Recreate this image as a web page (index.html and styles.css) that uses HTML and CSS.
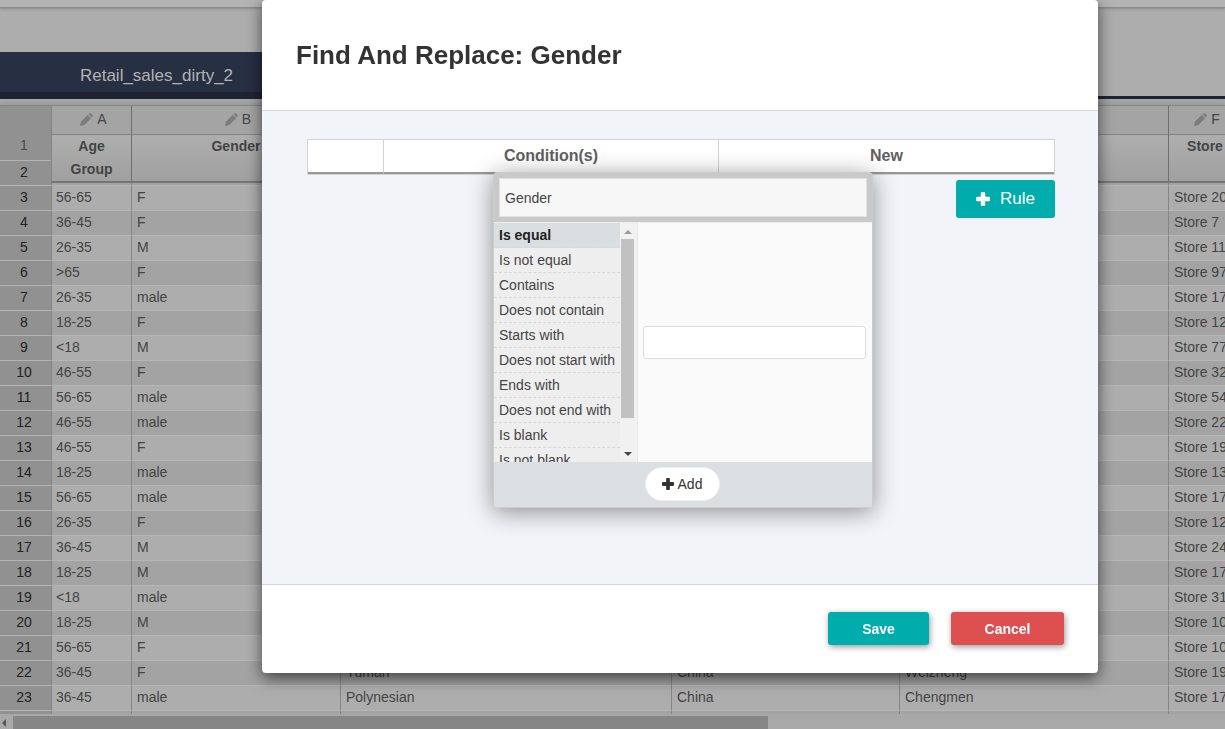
FILE: index.html
```
<!DOCTYPE html>
<html lang="en">
<head>
<meta charset="utf-8">
<title>Find And Replace</title>
<link rel="stylesheet" href="styles.css">
</head>
<body>
<svg class="defs" aria-hidden="true">
  <symbol id="pencil" viewBox="0 0 14 14"><path d="M8.400 2 12 5.600 4.600 13 .9 13.900Q0 14 .1 13.100L1 9.400ZM9.200 1.200 10 .5Q11 -.4 12 .5L13.500 2Q14.400 3 13.500 4L12.800 4.800Z"/></symbol>
  <symbol id="plus" viewBox="0 0 14 14"><path d="M5.700 0h2.600q.9 0 .9.900V4.800h3.900q.9 0 .9.900v2.600q0 .9-.9.900H9.200v3.900q0 .9-.9.900H5.700q-.9 0-.9-.9V9.200H.9Q0 9.200 0 8.300V5.700Q0 4.800.9 4.800H4.800V.9Q4.800 0 5.700 0Z"/></symbol>
</svg>
<main class="workspace">
  <div class="topbar"></div>
  <nav class="tabs"><a class="tab" href="#">Retail_sales_dirty_2</a></nav>
  <div class="sheet">
    <div class="row-numbers" id="numbers"></div>
    <table class="grid">
      <colgroup><col class="c-a"><col class="c-b"><col class="c-c"><col class="c-d"><col class="c-e"><col class="c-f"></colgroup>
      <thead>
        <tr class="letters" id="letters"></tr>
        <tr class="names"><th>Age<br>Group</th><th>Gender</th><th></th><th></th><th></th><th>Store</th></tr>
        <tr class="spacer"><td></td><td></td><td></td><td></td><td></td><td></td></tr>
      </thead>
      <tbody id="rows"></tbody>
    </table>
  </div>
  <div class="hscroll">
    <svg class="arrow-left" viewBox="0 0 4 8"><path d="M4 0v8L0 4z"/></svg>
    <div class="hthumb"></div>
  </div>
</main>
<div class="overlay">
  <section class="modal" role="dialog" aria-labelledby="title">
    <header class="modal-head"><h1 id="title">Find And Replace: Gender</h1></header>
    <div class="modal-body">
      <table class="rules"><thead><tr><th class="rule-index"></th><th>Condition(s)</th><th>New</th></tr></thead></table>
      <button class="rule-btn" type="button"><svg class="plus-lg"><use href="#plus"/></svg>Rule</button>
      <div class="popup">
        <div class="popup-search"><input type="text" value="Gender" aria-label="Column"></div>
        <div class="popup-main">
          <ul class="ops">
            <li class="selected">Is equal</li><li>Is not equal</li><li>Contains</li><li>Does not contain</li><li>Starts with</li><li>Does not start with</li><li>Ends with</li><li>Does not end with</li><li>Is blank</li><li>Is not blank</li>
          </ul>
          <div class="vscroll">
            <svg class="arrow-v up" viewBox="0 0 8 4"><path d="M0 4h8L4 0z"/></svg>
            <div class="vthumb"></div>
            <svg class="arrow-v" viewBox="0 0 8 4"><path d="M0 0h8L4 4z"/></svg>
          </div>
          <div class="value"><input type="text" aria-label="Value"></div>
        </div>
        <div class="popup-foot"><button class="add-btn" type="button"><svg class="plus-sm"><use href="#plus"/></svg>Add</button></div>
      </div>
    </div>
    <footer class="modal-foot"><button class="btn save" type="button">Save</button><button class="btn cancel" type="button">Cancel</button></footer>
  </section>
</div>
<script src="app.js"></script>
</body>
</html>
```
FILE: styles.css
```
* { box-sizing: border-box; }
body { margin: 0; height: 100vh; overflow: hidden; background: #a8a8a8; font-family: "Liberation Sans", Arial, sans-serif; font-size: 14px; color: #444; }
button, input { font: inherit; color: inherit; }
.defs { position: absolute; width: 0; height: 0; }
svg { fill: currentColor; }

.workspace { height: 100%; display: flex; flex-direction: column; overflow: hidden; }
.topbar { flex: none; height: 8px; background: #b3b3b3; border-bottom: 1px solid #8c8c8c; box-shadow: 0 1px 3px #888; z-index: 1; }
.tabs { flex: none; display: flex; align-items: flex-end; height: 91px; background: #adadad; border-bottom: 3px solid #1f2433; }
.tab { width: 313px; height: 44px; border-bottom: 4px solid #1f2433; background: #272f42; color: #b3b3b3; font-size: 17px; line-height: 48px; text-align: center; text-decoration: none; }
.sheet { flex: 1; min-height: 0; display: flex; overflow: hidden; margin-top: 6px; border-top: 1px solid #858585; box-shadow: 0 -2px 4px #999; }
.row-numbers { flex: none; width: 51px; background: #919191; color: #222; }
.row-numbers div { height: 25px; border-top: 1px solid #b3b3b3; padding-right: 3px; line-height: 23px; text-align: center; }
.row-numbers div:first-child { height: 54px; border: 0; padding-top: 28px; color: #4a4a4a; }

.grid { flex: none; width: 1191px; table-layout: fixed; border-collapse: separate; border-spacing: 0; }
.c-a { width: 81px; } .c-b { width: 209px; } .c-c { width: 331px; } .c-d { width: 228px; } .c-e { width: 269px; } .c-f { width: 73px; }
.grid th, .grid td { padding: 0 0 0 5px; border-right: 1px solid #858585; white-space: nowrap; }
.grid th { padding: 0; border-color: #6f6f6f; }
.grid tr > :first-child { border-left: 1px solid #858585; }
.grid tr > td:first-child { padding-left: 4px; }
.letters th { height: 29px; background: #a4a4a4; border-bottom: 1px solid #858585; font-weight: 400; line-height: 26px; vertical-align: top; }
.letter { display: flex; justify-content: center; align-items: center; gap: 4px; padding-left: 4px; }
.pencil { width: 13px; height: 13px; color: #7c7c7c; }
.names th { height: 48px; border-bottom: 2px solid #757575; background: linear-gradient(#aeaeae, #a0a0a0); vertical-align: top; line-height: 23px; }
.spacer td { height: 2px; background: #a3a3a3; }
.grid tbody td { height: 25px; padding-bottom: 2px; border-top: 1px solid #b6b6b6; background: #adadad; line-height: 22px; }
.grid tbody tr:nth-child(even) td { background: #a3a3a3; }

.hscroll { flex: none; display: flex; align-items: center; height: 15px; padding: 2px 0 0 2px; background: #a8a8a8; color: #555; }
.arrow-left { width: 4px; height: 8px; }
.hthumb { width: 61.7%; height: 13px; margin-left: 7px; background: #868686; }

.overlay { position: fixed; inset: 0; z-index: 2; padding: 0 127px 0 262px; }
.modal { background: #fff; border-radius: 4px; box-shadow: 0 5px 15px rgba(0, 0, 0, .6); }
.modal-head { height: 111px; padding: 38px 34px 0; border-bottom: 1px solid #d5d5d5; }
.modal-head h1 { margin: 0; color: #333; font-size: 26px; line-height: 34px; }
.modal-body { position: relative; height: 474px; padding: 28px 43px 0 45px; background: #f3f4f9; border-bottom: 1px solid #d5d5d5; }
.rules { width: 100%; table-layout: fixed; border-collapse: separate; border-spacing: 0; border: 1px solid #d3d3d3; background: #fff; }
.rules th { height: 34px; padding: 0; border-right: 1px solid #d3d3d3; border-bottom: 2px solid #999; color: #5f5f5f; font-size: 16px; }
.rules th:last-child { border-right: 0; }
.rule-index { width: 76px; }
.rule-btn { display: flex; align-items: center; justify-content: center; gap: 10px; width: 99px; height: 38px; margin: 5px 0 0 auto; border: 0; border-radius: 3px; background: #00acac; color: #fff; font-size: 17px; }
.plus-lg { width: 14px; height: 14px; }

.popup { position: absolute; left: 231px; top: 61px; width: 380px; border: 1px solid #ccc; border-radius: 4px; box-shadow: 0 4px 24px rgba(0, 0, 0, .42); background: #fafafa; }
.popup-search { padding: 5px; border-bottom: 1px solid #eee; background: #c9c9c9; }
.popup-search input { display: block; width: 100%; height: 39px; padding: 0 5px; border: 1px solid #e2e2e2; background: #f7f7f7; }
.popup-main { display: flex; height: 239px; overflow: hidden; }
.ops { flex: none; width: 126px; margin: 0; padding: 0; list-style: none; background: #eee; }
.ops li { height: 25px; padding-left: 5px; border-bottom: 1px dashed #d8d8d8; line-height: 24px; white-space: nowrap; color: #444; }
.ops .selected { background: #d9dee1; color: #222; font-weight: 700; }
.vscroll { flex: none; display: flex; flex-direction: column; align-items: center; width: 18px; padding: 7px 3px 6px 1px; background: #f1f1f1; border-right: 1px solid #e8e8e8; color: #444; }
.arrow-v { width: 8px; height: 4px; }
.up { color: #999; }
.vthumb { width: 13px; height: 179px; margin: 5px 0 auto; background: #c1c1c1; }
.value { flex: 1; display: flex; align-items: center; padding: 0 6px 0 5px; }
.value input { width: 100%; height: 33px; border: 1px solid #ddd; border-radius: 3px; background: #fff; }
.popup-foot { display: flex; justify-content: center; height: 45px; padding: 5px 2px 0 0; border-radius: 0 0 3px 3px; background: #dcdfe2; }
.add-btn { display: flex; align-items: center; justify-content: center; gap: 4px; width: 75px; height: 34px; border: 1px solid #eee; border-radius: 17px; background: #fff; color: #333; }
.plus-sm { width: 12px; height: 12px; }
.modal-foot { display: flex; justify-content: flex-end; gap: 22px; padding: 27px 34px 28px; }
.btn { height: 33px; border: 0; border-radius: 3px; color: #fff; font-weight: 700; box-shadow: 1px 2px 6px rgba(0, 0, 0, .4); }
.save { width: 101px; background: #00acac; }
.cancel { width: 113px; background: #de4f4f; }
```
FILE: app.js
```
const ages = ['56-65','36-45','26-35','>65','26-35','18-25','<18','46-55','56-65','46-55','46-55','18-25','56-65','26-35','36-45','18-25','<18','18-25','56-65','36-45','36-45'];
const genders = ['F','F','M','F','male','F','M','F','male','male','F','male','male','F','M','M','male','M','F','F','male'];
const stores = [20,7,11,97,17,12,77,32,54,22,19,13,17,12,24,17,31,10,10,19,17];
const places = { 19: ['Yuman', 'China', 'Weizheng'], 20: ['Polynesian', 'China', 'Chengmen'] };

document.getElementById('letters').innerHTML = [...'ABCDEF'].map(l =>
  `<th><span class="letter"><svg class="pencil"><use href="#pencil"/></svg>${l}</span></th>`).join('');

const numbers = document.getElementById('numbers');
for (let n = 1; n <= 23; n++) {
  const cell = document.createElement('div');
  cell.textContent = n;
  numbers.append(cell);
}
numbers.append(document.createElement('div'));

const rows = document.getElementById('rows');
ages.forEach((age, i) => {
  const tr = rows.insertRow();
  [age, genders[i], ...(places[i] || ['', '', '']), 'Store ' + stores[i]].forEach(t => {
    tr.insertCell().textContent = t;
  });
});
const last = rows.insertRow();
for (let i = 0; i < 6; i++) last.insertCell();
```
